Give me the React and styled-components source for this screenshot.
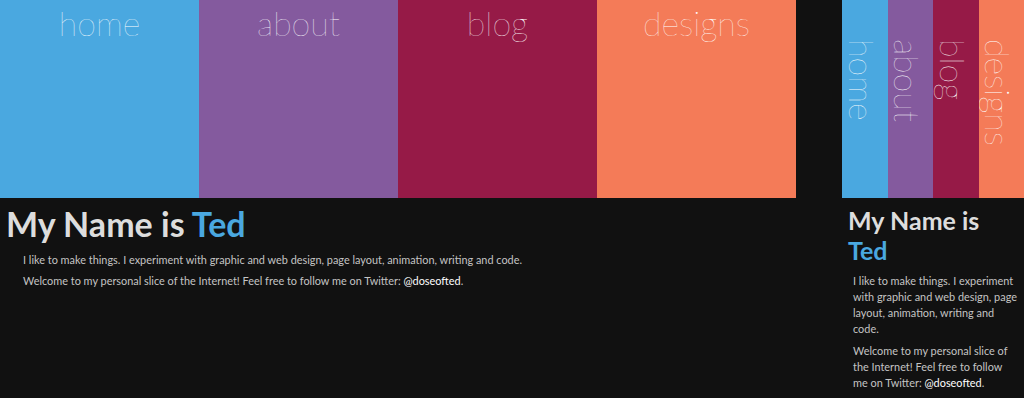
import React from "react";
import styled, { createGlobalStyle } from "styled-components";

const GlobalStyle = createGlobalStyle`
  html, body {
    margin: 0;
    padding: 0;
    background: #111111;
  }
  body {
    font-family: Lato, "Open Sans", sans-serif;
    overflow: hidden;
  }
`;

const links = [
  { label: "home", color: "#4aa8e0" },
  { label: "about", color: "#845a9e" },
  { label: "blog", color: "#961a47" },
  { label: "designs", color: "#f47b58" },
];

const Page = styled.div`
  display: flex;
  gap: 46px;
  width: 1024px;
  height: 398px;
  background: #111111;
`;

const Screen = styled.div`
  width: ${(p) => p.width}px;
  flex-shrink: 0;
  display: flex;
  flex-direction: column;
`;

const Nav = styled.nav`
  display: flex;
  height: 198px;
`;

const Tile = styled.a`
  flex: 1;
  display: block;
  background: ${(p) => p.color};
  color: #ffffff;
  font-weight: 100;
  font-size: 34px;
  line-height: 41px;
  text-decoration: none;
  text-align: center;
  overflow: hidden;
  padding-top: 2px;
  ${(p) =>
    p.vertical &&
    `
    writing-mode: vertical-rl;
    text-align: left;
    padding: 39px 5px 0 0;
  `}
`;

const Content = styled.main`
  padding: ${(p) => (p.narrow ? "5px 5px 0 6px" : "5px 6px 0 6px")};
`;

const Title = styled.h1`
  margin: ${(p) => (p.narrow ? "2px 0 0" : "0")};
  color: #dddddd;
  font-weight: 700;
  font-size: ${(p) => (p.narrow ? "25px" : "34px")};
  line-height: ${(p) => (p.narrow ? "30px" : "42px")};
`;

const Name = styled.span`
  color: #4aa8e0;
`;

const Text = styled.p`
  margin: ${(p) => (p.narrow ? "6px 0 0 5px" : "5px 0 0 17px")};
  color: #c4c4c4;
  font-weight: 400;
  font-size: 10.9px;
  line-height: 16px;

  &:first-of-type {
    margin-top: ${(p) => (p.narrow ? "8px" : "7px")};
  }
`;

const Handle = styled.a`
  color: #ffffff;
  text-decoration: none;
`;

function Site({ narrow }) {
  return (
    <Screen width={narrow ? 182 : 796}>
      <Nav>
        {links.map((l) => (
          <Tile key={l.label} color={l.color} vertical={narrow}>
            {l.label}
          </Tile>
        ))}
      </Nav>
      <Content narrow={narrow}>
        <Title narrow={narrow}>
          My Name is <Name>Ted</Name>
        </Title>
        <Text narrow={narrow}>
          I like to make things. I experiment with graphic and web design, page
          layout, animation, writing and code.
        </Text>
        <Text narrow={narrow}>
          Welcome to my personal slice of the Internet! Feel free to follow me
          on Twitter: <Handle>@doseofted</Handle>.
        </Text>
      </Content>
    </Screen>
  );
}

export default function App() {
  return (
    <Page>
      <GlobalStyle />
      <Site />
      <Site narrow />
    </Page>
  );
}
